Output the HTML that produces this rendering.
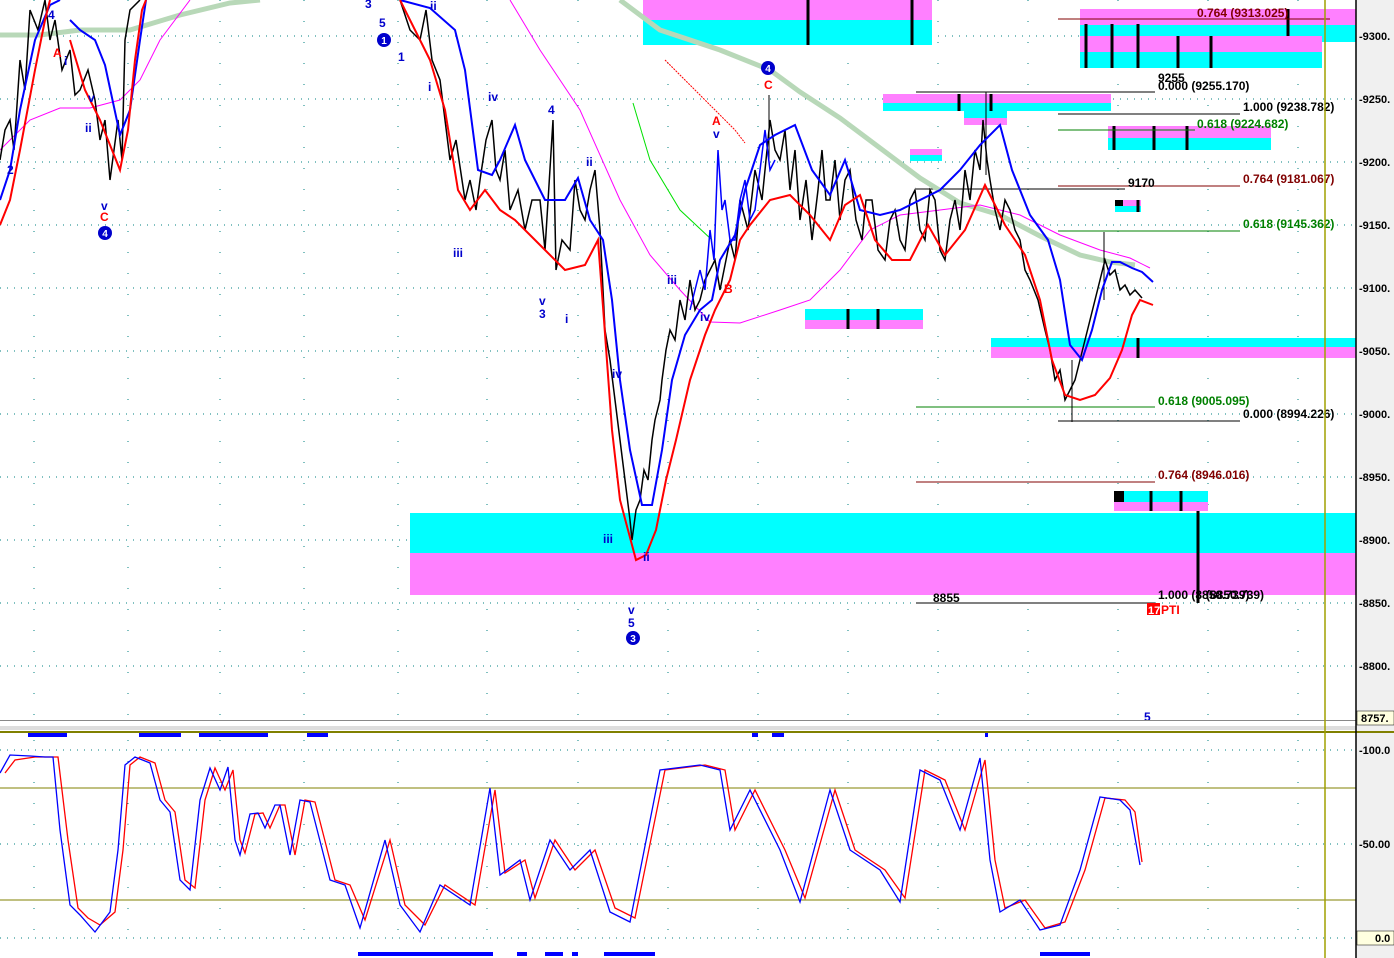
<!DOCTYPE html>
<html><head><meta charset="utf-8"><style>
html,body{margin:0;padding:0;background:#fff;}
svg{display:block;font-family:"Liberation Sans",Arial,sans-serif;}
</style></head><body>
<svg width="1394" height="958" viewBox="0 0 1394 958" xmlns="http://www.w3.org/2000/svg">
<rect width="1394" height="958" fill="#fff"/>
<rect x="1356" y="0" width="38" height="958" fill="#f0f0f0"/>
<!-- grid -->
<g stroke="#008080" stroke-width="1" stroke-dasharray="1,6">
<line x1="0" y1="36" x2="1356" y2="36"/><line x1="0" y1="99" x2="1356" y2="99"/><line x1="0" y1="162" x2="1356" y2="162"/><line x1="0" y1="225" x2="1356" y2="225"/><line x1="0" y1="288" x2="1356" y2="288"/><line x1="0" y1="351" x2="1356" y2="351"/><line x1="0" y1="414" x2="1356" y2="414"/><line x1="0" y1="477" x2="1356" y2="477"/><line x1="0" y1="540" x2="1356" y2="540"/><line x1="0" y1="603" x2="1356" y2="603"/><line x1="0" y1="666" x2="1356" y2="666"/>
<line x1="0" y1="750" x2="1356" y2="750"/><line x1="0" y1="844" x2="1356" y2="844"/><line x1="0" y1="938" x2="1356" y2="938"/>
</g>
<g stroke="#008080" stroke-width="1" stroke-dasharray="1,20">
<line x1="34" y1="0" x2="34" y2="720"/><line x1="128" y1="0" x2="128" y2="720"/><line x1="220" y1="0" x2="220" y2="720"/><line x1="304" y1="0" x2="304" y2="720"/><line x1="398" y1="0" x2="398" y2="720"/><line x1="487" y1="0" x2="487" y2="720"/><line x1="578" y1="0" x2="578" y2="720"/><line x1="668" y1="0" x2="668" y2="720"/><line x1="758" y1="0" x2="758" y2="720"/><line x1="848" y1="0" x2="848" y2="720"/><line x1="938" y1="0" x2="938" y2="720"/><line x1="1028" y1="0" x2="1028" y2="720"/><line x1="1118" y1="0" x2="1118" y2="720"/><line x1="1208" y1="0" x2="1208" y2="720"/><line x1="1298" y1="0" x2="1298" y2="720"/>
<line x1="34" y1="740" x2="34" y2="950"/><line x1="128" y1="740" x2="128" y2="950"/><line x1="220" y1="740" x2="220" y2="950"/><line x1="304" y1="740" x2="304" y2="950"/><line x1="398" y1="740" x2="398" y2="950"/><line x1="487" y1="740" x2="487" y2="950"/><line x1="578" y1="740" x2="578" y2="950"/><line x1="668" y1="740" x2="668" y2="950"/><line x1="758" y1="740" x2="758" y2="950"/><line x1="848" y1="740" x2="848" y2="950"/><line x1="938" y1="740" x2="938" y2="950"/><line x1="1028" y1="740" x2="1028" y2="950"/><line x1="1118" y1="740" x2="1118" y2="950"/><line x1="1208" y1="740" x2="1208" y2="950"/><line x1="1298" y1="740" x2="1298" y2="950"/>
</g>
<!-- zones -->
<g>
<rect x="410" y="513" width="946" height="40" fill="#00ffff"/><rect x="410" y="553" width="946" height="42" fill="#ff80ff"/>
<rect x="643" y="0" width="289" height="20" fill="#ff80ff"/><rect x="643" y="20" width="289" height="25" fill="#00ffff"/>
<rect x="1080" y="9" width="276" height="16" fill="#ff80ff"/><rect x="1080" y="25" width="276" height="17" fill="#00ffff"/>
<rect x="1080" y="36" width="242" height="16" fill="#ff80ff"/><rect x="1080" y="52" width="242" height="16" fill="#00ffff"/>
<rect x="883" y="94" width="228" height="9" fill="#ff80ff"/><rect x="883" y="103" width="228" height="8" fill="#00ffff"/>
<rect x="964" y="111" width="43" height="7" fill="#00ffff"/><rect x="964" y="118" width="43" height="7" fill="#ff80ff"/>
<rect x="1108" y="126" width="163" height="12" fill="#ff80ff"/><rect x="1108" y="138" width="163" height="12" fill="#00ffff"/>
<rect x="910" y="149" width="32" height="6" fill="#ff80ff"/><rect x="910" y="155" width="32" height="6" fill="#00ffff"/>
<rect x="1115" y="200" width="26" height="6" fill="#ff80ff"/><rect x="1115" y="206" width="26" height="6" fill="#00ffff"/>
<rect x="805" y="309" width="118" height="11" fill="#00ffff"/><rect x="805" y="320" width="118" height="9" fill="#ff80ff"/>
<rect x="991" y="338" width="365" height="9" fill="#00ffff"/><rect x="991" y="347" width="365" height="11" fill="#ff80ff"/>
<rect x="1114" y="491" width="94" height="11" fill="#00ffff"/><rect x="1114" y="502" width="94" height="9" fill="#ff80ff"/>
</g>
<g stroke="#000" stroke-width="3">
<line x1="808" y1="0" x2="808" y2="45"/><line x1="912" y1="0" x2="912" y2="45"/>
<line x1="1086" y1="24" x2="1086" y2="68"/><line x1="1112" y1="24" x2="1112" y2="68"/><line x1="1138" y1="24" x2="1138" y2="68"/>
<line x1="1178" y1="36" x2="1178" y2="68"/><line x1="1211" y1="36" x2="1211" y2="68"/><line x1="1288" y1="9" x2="1288" y2="36"/>
<line x1="959" y1="94" x2="959" y2="111"/><line x1="991" y1="94" x2="991" y2="111"/>
<line x1="1114" y1="126" x2="1114" y2="150"/><line x1="1154" y1="126" x2="1154" y2="150"/><line x1="1187" y1="126" x2="1187" y2="150"/>
<line x1="848" y1="309" x2="848" y2="329"/><line x1="878" y1="309" x2="878" y2="329"/>
<line x1="1138" y1="200" x2="1138" y2="212"/><line x1="1138" y1="338" x2="1138" y2="358"/>
<line x1="1151" y1="491" x2="1151" y2="511"/><line x1="1181" y1="491" x2="1181" y2="511"/>
<line x1="1198" y1="511" x2="1198" y2="603"/>
</g>
<rect x="1114" y="491" width="10" height="11" fill="#000"/><rect x="1115" y="200" width="8" height="6" fill="#000"/>
<!-- fib lines -->
<g stroke-width="1">
<line x1="1058" y1="19" x2="1330" y2="19" stroke="#800000"/>
<line x1="916" y1="92" x2="1155" y2="92" stroke="#000"/>
<line x1="1058" y1="114" x2="1240" y2="114" stroke="#000"/>
<line x1="1058" y1="130" x2="1195" y2="130" stroke="#008000"/>
<line x1="1058" y1="186" x2="1240" y2="186" stroke="#800000"/>
<line x1="916" y1="189" x2="1125" y2="189" stroke="#000"/>
<line x1="1058" y1="231" x2="1240" y2="231" stroke="#008000"/>
<line x1="916" y1="407" x2="1155" y2="407" stroke="#008000"/>
<line x1="1058" y1="421" x2="1240" y2="421" stroke="#000"/>
<line x1="916" y1="482" x2="1155" y2="482" stroke="#800000"/>
<line x1="916" y1="603" x2="1155" y2="603" stroke="#000"/>
</g>
<!-- MAs -->
<polyline fill="none" stroke="#b8d8b8" stroke-width="5" points="0,35 40,35 80,30 130,30 180,15 230,3 260,0"/>
<polyline fill="none" stroke="#b8d8b8" stroke-width="5" points="620,0 660,30 720,50 770,70 800,92 840,118 880,148 920,178 960,203 1000,215 1040,236 1080,255 1110,262 1135,265"/>
<polyline fill="none" stroke="#ff00ff" stroke-width="1" points="0,150 30,120 60,108 90,108 120,100 140,80 160,40 190,0"/>
<polyline fill="none" stroke="#ff00ff" stroke-width="1" points="510,0 540,50 580,110 620,200 650,255 680,290 710,322 740,323 780,310 810,300 840,270 870,230 900,215 940,210 980,205 1020,215 1060,235 1100,250 1130,258 1150,268"/>
<polyline fill="none" stroke="#00e000" stroke-width="1" points="633,103 650,160 680,210 712,240"/>
<polyline fill="none" stroke="#ff0000" stroke-width="1" stroke-dasharray="2,1" points="665,60 700,95 735,130 745,143"/>
<!-- black candles approx -->
<polyline fill="none" stroke="#000" stroke-width="1.5" points="0,160 5,130 10,120 14,150 20,60 25,90 30,10 38,30 45,0 50,40 55,20 62,70 70,50 75,95 80,90 88,70 95,100 100,140 105,120 110,180 114,150 118,120 122,160 125,40 130,10 140,0"/>
<polyline fill="none" stroke="#000" stroke-width="1.5" points="400,0 410,30 420,40 426,10 432,60 440,80 445,120 450,160 456,140 465,200 470,180 476,210 480,180 486,140 492,120 496,170 500,180 505,150 510,210 518,190 525,230 532,200 540,200 545,250 553,120 556,270 562,240 570,250 575,180 580,210 585,220 590,190 595,170 600,230 605,330 610,360 615,400 620,440 625,480 630,520 632,540 636,510 640,500 644,470 648,480 652,440 655,420 660,400 662,380 666,350 670,330 675,340 680,300 685,320 690,280 695,310 700,300 705,280 715,260 720,290 730,240 735,260 740,200 748,230 755,170 762,200 770,120 775,150 780,160 785,130 790,190 795,150 800,220 806,180 812,240 818,190 822,150 826,200 830,200 835,160 840,220 845,180 850,170 856,220 862,240 866,200 872,200 878,250 885,260 890,220 895,210 900,240 905,250 910,200 915,190 920,230 925,240 930,190 935,200 940,250 945,260 950,220 955,200 960,230 965,170 970,200 975,150 980,170 983,120 987,160 990,180 995,210 1000,230 1005,200 1010,210 1015,230 1020,240 1025,270 1030,280 1038,300 1045,330 1050,350 1055,380 1060,370 1065,400 1070,390 1075,380 1080,360 1085,340 1090,320 1095,300 1100,280 1105,260 1110,275 1115,270 1120,290 1125,285 1130,295 1135,290 1142,298"/>
<line x1="1104" y1="232" x2="1104" y2="300" stroke="#000"/><line x1="1072" y1="360" x2="1072" y2="422" stroke="#000"/><line x1="986" y1="92" x2="986" y2="175" stroke="#000"/><line x1="769" y1="95" x2="769" y2="160" stroke="#000"/>
<polyline fill="none" stroke="#0000ff" stroke-width="1.5" points="690,310 700,270 705,290 710,230 714,260 718,150 722,210 725,200 730,240 735,240 740,200 745,180 750,220 755,210 760,170 765,130 770,170 775,160"/>
<polyline fill="none" stroke="#0000ff" stroke-width="2" points="0,200 10,170 20,110 35,40 50,5 60,0"/>
<polyline fill="none" stroke="#0000ff" stroke-width="2" points="70,20 80,30 95,40 105,65 120,135 130,110 140,40 146,0"/>
<polyline fill="none" stroke="#0000ff" stroke-width="2" points="400,0 430,8 455,30 465,70 478,170 492,175 500,160 515,125 525,160 545,200 565,200 578,178 590,220 603,240 612,300 620,380 630,450 642,505 652,505 662,450 672,380 685,335 700,310 712,300 720,260 735,235 745,190 760,145 775,135 795,125 812,170 830,195 845,160 860,210 880,215 900,210 920,200 940,190 960,170 980,145 1000,125 1012,170 1030,215 1048,240 1060,280 1070,345 1082,360 1092,330 1102,290 1112,262 1120,262 1132,268 1142,272 1153,282"/>
<polyline fill="none" stroke="#ff0000" stroke-width="2" points="0,225 10,200 20,150 35,70 45,20 50,0"/>
<polyline fill="none" stroke="#ff0000" stroke-width="2" points="70,40 85,90 100,120 112,150 120,170 128,130 135,60 142,10 146,0"/>
<polyline fill="none" stroke="#ff0000" stroke-width="2" points="400,0 415,30 430,60 445,110 458,190 470,210 485,190 500,210 515,220 530,235 545,250 565,270 585,265 598,240 604,320 612,430 620,500 628,530 636,560 646,555 656,530 666,480 676,440 690,380 705,335 715,310 730,280 740,240 750,225 770,200 790,195 810,215 830,240 845,205 860,195 875,240 892,260 910,260 928,225 945,255 965,230 985,185 1005,225 1025,255 1040,300 1052,360 1065,395 1080,400 1095,395 1110,378 1122,350 1132,315 1140,300 1153,305"/>
<!-- wave labels -->
<g font-size="12" font-weight="bold" fill="#0000cc">
<text x="365" y="8">3</text><text x="379" y="27">5</text><text x="398" y="61">1</text><text x="428" y="91">i</text><text x="430" y="10">ii</text><text x="453" y="257">iii</text><text x="488" y="101">iv</text><text x="548" y="114">4</text><text x="586" y="166">ii</text><text x="539" y="305">v</text><text x="539" y="318">3</text><text x="565" y="323">i</text><text x="612" y="378">iv</text><text x="603" y="543">iii</text><text x="643" y="561">ii</text><text x="628" y="614">v</text><text x="628" y="627">5</text><text x="667" y="284">iii</text><text x="700" y="321">iv</text><text x="713" y="138">v</text><text x="48" y="19">4</text><text x="64" y="65">i</text><text x="85" y="132">ii</text><text x="88" y="102">v</text><text x="101" y="210">v</text><text x="7" y="174">2</text><text x="1144" y="721">5</text>
</g>
<g font-size="12" font-weight="bold" fill="#ff0000">
<text x="53" y="57">A</text><text x="100" y="221">C</text><text x="712" y="125">A</text><text x="724" y="293">B</text><text x="764" y="89">C</text>
</g>
<g fill="#0000cc"><circle cx="384" cy="40" r="7"/><circle cx="105" cy="233" r="7"/><circle cx="633" cy="638" r="7"/><circle cx="768" cy="68" r="7"/></g>
<g font-size="10" font-weight="bold" fill="#fff" text-anchor="middle"><text x="384" y="44">1</text><text x="105" y="237">4</text><text x="633" y="642">3</text><text x="768" y="72">4</text></g>
<!-- fib labels -->
<g font-size="12" font-weight="bold">
<text x="1197" y="17" fill="#800000">0.764 (9313.025)</text>
<text x="1158" y="82" fill="#000">9255</text>
<text x="1158" y="90" fill="#000">0.000 (9255.170)</text>
<text x="1243" y="111" fill="#000">1.000 (9238.782)</text>
<text x="1197" y="128" fill="#008000">0.618 (9224.682)</text>
<text x="1243" y="183" fill="#800000">0.764 (9181.067)</text>
<text x="1128" y="187" fill="#000">9170</text>
<text x="1243" y="228" fill="#008000">0.618 (9145.362)</text>
<text x="1158" y="405" fill="#008000">0.618 (9005.095)</text>
<text x="1243" y="418" fill="#000">0.000 (8994.226)</text>
<text x="1158" y="479" fill="#800000">0.764 (8946.016)</text>
<text x="1158" y="599" fill="#000">1.000 (8850.739)</text>
<text x="1206" y="599" fill="#000">(8850.739)</text>
<text x="933" y="602" fill="#000">8855</text>
</g>
<rect x="1147" y="603" width="13" height="12" fill="#ff0000"/>
<text x="1148" y="614" font-size="11" font-weight="bold" fill="#fff">17</text>
<text x="1161" y="614" font-size="12" font-weight="bold" fill="#ff0000">PTI</text>
<!-- panel separator -->
<rect x="0" y="720" width="1356" height="1" fill="#888"/>
<rect x="0" y="726" width="1356" height="4" fill="#ddd"/>
<rect x="0" y="731" width="1394" height="2" fill="#808000"/>
<g fill="#0000ff">
<rect x="28" y="733" width="39" height="4"/><rect x="139" y="733" width="42" height="4"/><rect x="199" y="733" width="69" height="4"/><rect x="307" y="733" width="21" height="4"/><rect x="752" y="733" width="6" height="4"/><rect x="772" y="733" width="12" height="4"/><rect x="985" y="733" width="3" height="4"/>
<rect x="358" y="952" width="135" height="4"/><rect x="517" y="952" width="10" height="4"/><rect x="545" y="952" width="18" height="4"/><rect x="572" y="952" width="6" height="4"/><rect x="604" y="952" width="51" height="4"/><rect x="1040" y="952" width="50" height="4"/>
</g>
<line x1="0" y1="788" x2="1356" y2="788" stroke="#808000"/>
<line x1="0" y1="900" x2="1356" y2="900" stroke="#808000"/>
<line x1="1325" y1="0" x2="1325" y2="958" stroke="#a0a000" stroke-width="1.5"/>
<!-- oscillator -->
<polyline fill="none" stroke="#ff0000" stroke-width="1.3" points="5,773 15,760 35,757 50,757 58,757 68,840 78,908 88,918 100,925 115,912 123,850 130,765 140,757 155,763 165,800 175,812 185,880 195,888 205,800 215,768 225,790 233,770 240,840 245,853 255,814 263,813 270,828 280,805 285,805 295,855 305,800 315,802 335,880 350,885 365,920 390,840 405,905 425,925 445,885 475,905 495,790 505,873 525,860 535,898 555,840 575,870 595,850 615,908 635,918 665,770 705,765 725,770 735,830 755,790 785,850 805,898 835,790 855,850 885,870 905,898 925,770 945,780 965,830 985,760 995,860 1005,908 1025,900 1045,928 1065,922 1085,870 1105,798 1125,800 1135,812 1142,862"/>
<polyline fill="none" stroke="#0000ff" stroke-width="1.3" points="0,773 10,755 30,756 45,757 53,757 60,830 70,905 80,915 95,932 110,912 118,850 125,765 135,757 150,763 160,800 170,812 180,880 190,890 200,800 210,768 220,790 228,767 235,840 240,855 250,814 258,813 265,828 275,805 280,805 290,855 300,800 310,802 330,880 345,885 360,928 385,840 400,905 420,932 440,885 470,905 490,788 500,875 520,860 530,900 550,840 570,870 590,850 610,912 630,922 660,770 700,765 720,770 730,830 750,790 780,850 800,902 830,790 850,850 880,870 900,902 920,770 940,780 960,830 980,758 990,860 1000,912 1020,900 1040,930 1060,925 1080,870 1100,797 1120,800 1130,810 1140,865"/>
<!-- axis -->
<line x1="1356" y1="0" x2="1356" y2="958" stroke="#000" stroke-width="1.5"/>
<g font-size="11" font-weight="bold" fill="#000">
<text x="1359" y="40">-9300.</text><text x="1359" y="103">-9250.</text><text x="1359" y="166">-9200.</text><text x="1359" y="229">-9150.</text><text x="1359" y="292">-9100.</text><text x="1359" y="355">-9050.</text><text x="1359" y="418">-9000.</text><text x="1359" y="481">-8950.</text><text x="1359" y="544">-8900.</text><text x="1359" y="607">-8850.</text><text x="1359" y="670">-8800.</text>
<text x="1359" y="754">-100.0</text><text x="1359" y="848">-50.00</text>
</g>
<rect x="1357" y="711" width="37" height="14" fill="#ffffe0" stroke="#000" stroke-width="0.5"/>
<text x="1361" y="722" font-size="11" font-weight="bold">8757.</text>
<rect x="1357" y="931" width="37" height="14" fill="#ffffe0" stroke="#000" stroke-width="0.5"/>
<text x="1375" y="942" font-size="11" font-weight="bold">0.0</text>
</svg>
</body></html>
